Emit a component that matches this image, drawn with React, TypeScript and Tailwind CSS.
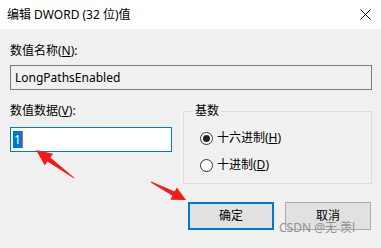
export default function App() {
  return (
    <div
      className="relative w-[381px] h-[248px] overflow-hidden bg-[#f0f0f0] text-[12px] leading-[16px] text-black"
      style={{ fontFamily: '"Noto Sans", "Noto Sans CJK SC", sans-serif' }}
    >
      {/* title bar */}
      <div className="h-[29px] bg-white flex items-center justify-between pl-[7px] pr-[9px]">
        <span>编辑 DWORD (32 位)值</span>
        <svg width="11" height="11" viewBox="0 0 11 11" className="mr-[1px]">
          <path d="M0.5 0.5 L10.5 10.5 M10.5 0.5 L0.5 10.5" stroke="#111" strokeWidth="1" />
        </svg>
      </div>

      <div className="pl-[10px] pr-[9px] pt-[14px]">
        <div>
          数值名称(<span className="underline">N</span>):
        </div>
        <div className="mt-[6px] h-[25px] border border-[#7a7a7a] bg-[#f0f0f0] flex items-center pl-[4px]">
          LongPathsEnabled
        </div>

        <div className="mt-[13px] flex">
          <div className="w-[162px]">
            <div>
              数值数据(<span className="underline">V</span>):
            </div>
            <div className="mt-[8px] h-[25px] border border-[#0078d7] bg-white flex items-center pl-[2px]">
              <span className="bg-[#0078d7] text-white px-[1px] leading-[17px]">1</span>
              <span className="w-[1px] h-[17px] bg-[#d86a2a]" />
            </div>
          </div>

          <fieldset className="ml-[11px] flex-1 border border-[#dcdcdc] pl-[16px] pb-[10px]">
            <legend className="-ml-[7px] px-[2px]">基数</legend>
            <div className="mt-[11px] flex items-center gap-[4px]">
              <span className="w-[13px] h-[13px] rounded-full border border-[#333] bg-white flex items-center justify-center">
                <span className="w-[7px] h-[7px] rounded-full bg-[#222]" />
              </span>
              <span>
                十六进制(<span className="underline">H</span>)
              </span>
            </div>
            <div className="mt-[11px] flex items-center gap-[4px]">
              <span className="w-[13px] h-[13px] rounded-full border border-[#333] bg-white" />
              <span>
                十进制(<span className="underline">D</span>)
              </span>
            </div>
          </fieldset>
        </div>

        <div className="mt-[18px] flex justify-end gap-[11px] pr-[1px]">
          <button className="w-[86px] h-[28px] border-2 border-[#0078d7] bg-[#e1e1e1]">确定</button>
          <button className="w-[86px] h-[28px] border border-[#adadad] bg-[#e1e1e1]">取消</button>
        </div>
      </div>

      {/* watermark */}
      <div className="absolute left-[279px] top-[220px] text-[12px] text-[#8a8a8a] opacity-90">
        CSDN @无 羡l
      </div>

      {/* red arrows */}
      <svg className="absolute inset-0 pointer-events-none" width="381" height="248">
        <polygon
          fill="#f41a1a"
          points="36,150 53.1,153.8 50.4,157.5 74.3,177.7 73.7,178.3 47.4,161.5 44.7,165.2"
        />
        <polygon
          fill="#f41a1a"
          points="186,200 170.4,199.8 172.5,195.8 150.8,182.4 151.2,181.6 174.7,191.4 176.8,187.4"
        />
      </svg>
    </div>
  )
}
